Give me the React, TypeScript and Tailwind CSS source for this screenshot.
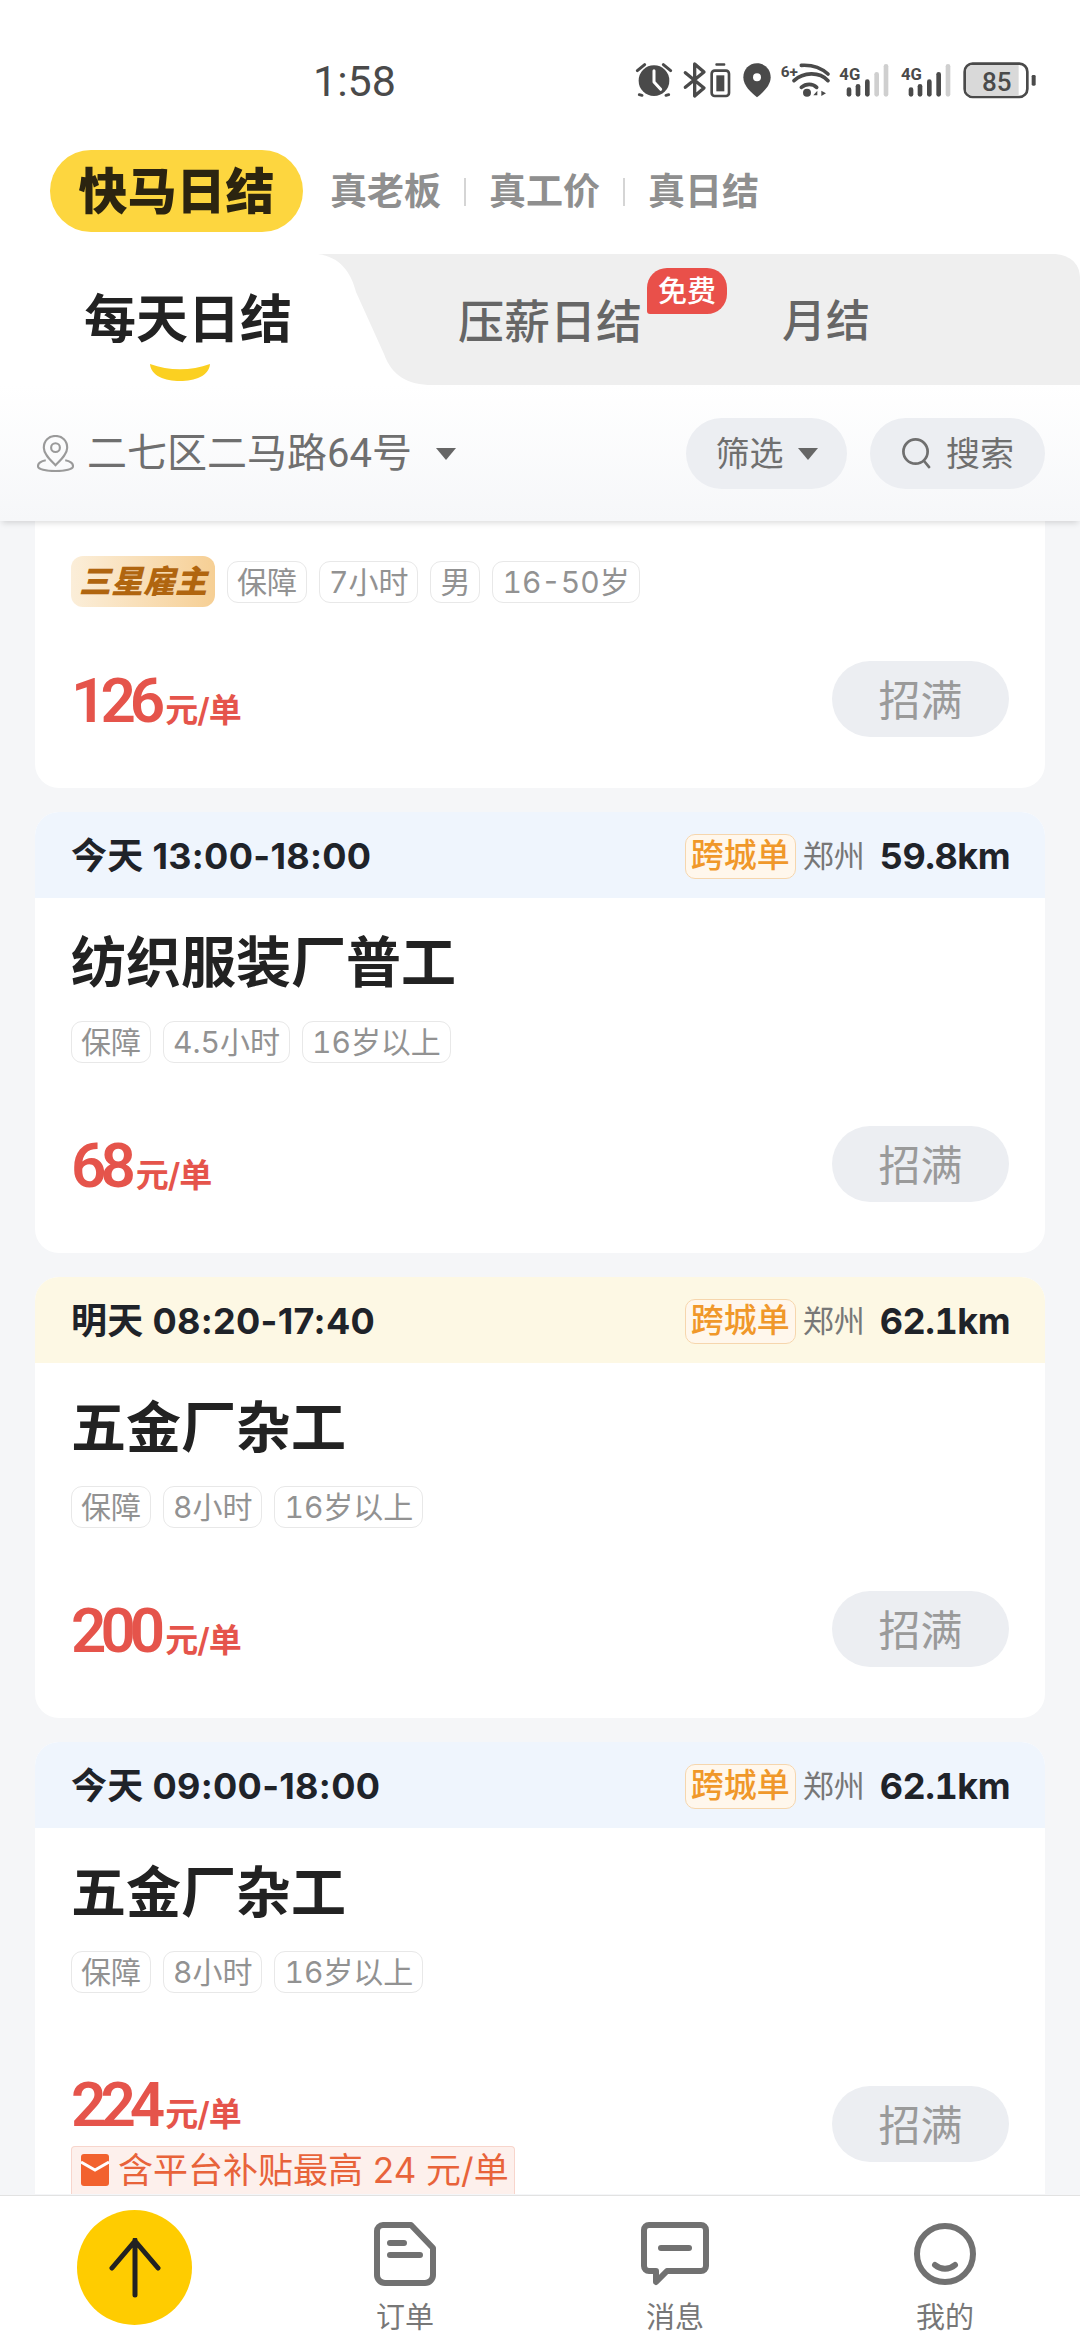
function StatusIcons() {
  return (
    <svg viewBox="0 0 1440 240" className="w-[480px] h-[80px] shrink-0" fill="#4a4a4a">
      {/* alarm */}
      <circle cx="162" cy="122" r="46" />
      <path d="M162 92v34l20 22" fill="none" stroke="#fff" strokeWidth="9" strokeLinecap="round" strokeLinejoin="round" />
      <path d="M112 92l22-18M212 92l-22-18M126 166l-8 -2M198 166l8-2" stroke="#4a4a4a" strokeWidth="9" strokeLinecap="round" />
      {/* bluetooth + vibrate */}
      <path d="M256 98l56 46-28 24V72l28 24-56 46" fill="none" stroke="#4a4a4a" strokeWidth="10" strokeLinejoin="round" strokeLinecap="round" />
      <rect x="335" y="92" width="52" height="76" rx="9" fill="none" stroke="#4a4a4a" strokeWidth="8" />
      <rect x="349" y="106" width="24" height="48" />
      <rect x="346" y="70" width="30" height="7" rx="3" />
      {/* location */}
      <path d="M471 70c-24 0-41 19-41 42 0 26 25 47 41 60 16-13 41-34 41-60 0-23-17-42-41-42z" />
      <circle cx="471" cy="112" r="12" fill="#fff" />
      {/* wifi */}
      <text x="542" y="110" fontSize="46" fontWeight="700" fontFamily="Roboto, sans-serif">6+</text>
      <path d="M604 76c32-2 60 8 80 26M582 122c28-26 76-28 102 0M604 142c14-12 34-12 46 0" fill="none" stroke="#4a4a4a" strokeWidth="11" strokeLinecap="round" />
      <circle cx="621" cy="158" r="12" />
      <path d="M640 166l12-14v14zM664 152l14 8-14 8z" />
      {/* signal 1 */}
      <text x="718" y="120" fontSize="50" fontWeight="700" fontFamily="Roboto, sans-serif">4G</text>
      <rect x="740" y="142" width="14" height="28" rx="7" />
      <rect x="767" y="132" width="14" height="38" rx="7" />
      <rect x="795" y="118" width="14" height="52" rx="7" />
      <rect x="823" y="96" width="14" height="74" rx="7" fill="#cfcfcf" />
      <rect x="851" y="72" width="14" height="98" rx="7" fill="#cfcfcf" />
      {/* signal 2 */}
      <text x="903" y="120" fontSize="50" fontWeight="700" fontFamily="Roboto, sans-serif">4G</text>
      <rect x="926" y="142" width="14" height="28" rx="7" />
      <rect x="953" y="132" width="14" height="38" rx="7" />
      <rect x="981" y="118" width="14" height="52" rx="7" />
      <rect x="1009" y="96" width="14" height="74" rx="7" />
      <rect x="1037" y="72" width="14" height="98" rx="7" fill="#cfcfcf" />
      {/* battery */}
      <rect x="1094" y="71" width="188" height="100" rx="24" fill="none" stroke="#4a4a4a" strokeWidth="8" />
      <path d="M1118 75h138v92h-138a20 20 0 0 1-20-20v-52a20 20 0 0 1 20-20z" fill="#d9d9d9" />
      <rect x="1295" y="105" width="12" height="32" rx="4" />
      <text x="1190" y="152" textAnchor="middle" fontSize="78" fontWeight="500" fontFamily="Roboto, sans-serif">85</text>
    </svg>
  );
}

function StatusBar() {
  return (
    <div className="flex h-[130px] pt-[40px] pl-[313px] items-start justify-between">
      <span className="text-[43px] leading-[82px] text-[#4a4a4a] font-['Roboto']">1:58</span>
      <StatusIcons />
    </div>
  );
}

function BrandRow() {
  return (
    <div className="flex h-[124px] items-start pl-[50px] pt-[20px]">
      <div className="flex h-[82px] w-[253px] items-center justify-center rounded-[41px] bg-[#fdd63f] pt-[2px] text-[49px] font-black text-[#2b2410]">
        快马日结
      </div>
      <div className="flex h-[82px] items-center pl-[27px] pt-[2px] text-[37px] font-semibold text-[#8f8f8f]">
        <span>真老板</span>
        <span className="mx-[23px] h-[28px] w-[2px] bg-[#d5d5d5]" />
        <span>真工价</span>
        <span className="mx-[23px] h-[28px] w-[2px] bg-[#d5d5d5]" />
        <span>真日结</span>
      </div>
    </div>
  );
}

function Tabs() {
  return (
    <div className="relative z-20 h-[131px]">
      {/* inactive tab area */}
      <svg viewBox="0 0 1080 131" className="absolute inset-0 h-full w-full" fill="#efefef">
        <path d="M318 0C340 3 351 18 356 38L384 100C392 122 408 131 432 131H1080V24C1080 8 1068 0 1052 0Z" />
      </svg>
      <div className="relative flex h-full">
        <div className="relative w-[374px] pl-[84px] pt-[28px] text-[52px] leading-[76px] font-bold text-[#222]">
          每天日结
          <svg viewBox="0 0 62 20" className="absolute left-[149px] top-[108px] h-[20px] w-[62px]">
            <path d="M1 2C20 9 42 9 61 2C60 14 46 19 31 19C16 19 2 14 1 2Z" fill="#fbd021" />
          </svg>
        </div>
        <div className="relative ml-[84px] pt-[29px] text-[46px] leading-[76px] font-medium text-[#666]">
          压薪日结
          <span className="absolute left-[189px] top-[14px] flex h-[46px] w-[80px] items-center justify-center rounded-t-[20px] rounded-br-[20px] rounded-bl-[3px] bg-[#e9504a] text-[29px] leading-none font-medium text-white">
            免费
          </span>
        </div>
        <div className="ml-[140px] pt-[29px] text-[44px] leading-[76px] font-medium text-[#666]">月结</div>
      </div>
    </div>
  );
}

function Caret({ className }: { className: string }) {
  return (
    <svg viewBox="0 0 20 12" className={className} fill="#666">
      <path d="M0 0h20L10 12z" />
    </svg>
  );
}

function FilterRow() {
  return (
    <div className="relative z-10 flex h-[136px] items-start bg-gradient-to-b from-white to-[#f6f7f9] pl-[37px] pt-[33px] pr-[35px] shadow-[0_4px_6px_-2px_rgba(0,0,0,0.14)]">
      <div className="flex h-[71px] flex-1 items-center">
        <svg viewBox="0 0 38 38" className="h-[37px] w-[37px]" fill="none" stroke="#9a9a9a" strokeWidth="2.2">
          <path d="M19 1c-7 0-12 5-12 12 0 7 7 13 12 18 5-5 12-11 12-18 0-7-5-12-12-12z" />
          <circle cx="19" cy="13" r="4.5" />
          <path d="M9 26c-5 1-8 3-8 6 0 3 8 5 18 5s18-2 18-5c0-3-3-5-8-6" />
        </svg>
        <span className="ml-[13px] text-[40px] text-[#6f6f6f]">
          二七区二马路<span className="font-['Roboto']">64</span>号
        </span>
        <Caret className="ml-[24px] h-[12px] w-[20px]" />
      </div>
      <div className="flex h-[71px] w-[161px] items-center justify-center gap-[14px] rounded-[36px] bg-[#eceef2] text-[34px] text-[#6f6f6f]">
        筛选
        <Caret className="h-[12px] w-[20px]" />
      </div>
      <div className="ml-[23px] flex h-[71px] w-[175px] items-center justify-center gap-[14px] rounded-[36px] bg-[#eceef2] text-[34px] text-[#6f6f6f]">
        <svg viewBox="0 0 32 34" className="h-[33px] w-[31px]" fill="none" stroke="#6f6f6f" strokeWidth="2.8" strokeLinecap="round">
          <circle cx="15" cy="15" r="12.5" />
          <path d="M24 25l5 6" />
        </svg>
        搜索
      </div>
    </div>
  );
}

function Tag({ children }: { children: React.ReactNode }) {
  return (
    <span className="flex h-[42px] items-center rounded-[11px] border border-[#e8e8e8] bg-white px-[9px] text-[30px] leading-none text-[#929292] tabular-nums">
      {children}
    </span>
  );
}

function Price({ value }: { value: string }) {
  return (
    <div className="flex items-baseline pt-[6px] text-[#e5544b]">
      <span className="pr-[6px] font-['Roboto'] text-[62px] leading-[66px] font-semibold tracking-[-6px]">{value}</span>
      <span className="text-[33px] font-semibold tracking-[-1px]">元/单</span>
    </div>
  );
}

function FullButton() {
  return (
    <div className="flex h-[76px] w-[177px] items-center justify-center rounded-[38px] bg-[#eceef2] pt-[3px] text-[42px] text-[#9a9a9a]">
      招满
    </div>
  );
}

function CardHeader({ when, dist, tone }: { when: string; dist: string; tone: string }) {
  return (
    <div className={`flex h-[86px] items-center pl-[36px] pr-[35px] pt-[2px] ${tone}`}>
      <span className="text-[36px] font-bold tracking-[0.3px] text-[#1f2329]">{when}</span>
      <span className="ml-auto flex h-[45px] items-center rounded-[10px] border border-[#f6d6ad] bg-[#fff7ec] px-[5px] text-[33px] font-medium text-[#f0982a]">
        跨城单
      </span>
      <span className="ml-[7px] text-[31px] text-[#777]">郑州</span>
      <span className="ml-[15px] text-[36px] font-bold tracking-[-0.5px] tabular-nums text-[#1f2329]">{dist}</span>
    </div>
  );
}

type Job = {
  when: string;
  dist: string;
  title: string;
  tags: string[];
  price: string;
  tone: string;
};

function JobCard({ job }: { job: Job }) {
  return (
    <div className="mt-[24px] h-[441px] overflow-hidden rounded-[24px] bg-white">
      <CardHeader when={job.when} dist={job.dist} tone={job.tone} />
      <div className="px-[36px] pt-[26px]">
        <div className="text-[55px] leading-[76px] font-bold text-[#222]">{job.title}</div>
        <div className="mt-[21px] flex gap-[12px]">
          {job.tags.map((t) => (
            <Tag key={t}>{t}</Tag>
          ))}
        </div>
        <div className="mt-[63px] flex items-center justify-between">
          <Price value={job.price} />
          <FullButton />
        </div>
      </div>
    </div>
  );
}

function FirstCard() {
  return (
    <div className="h-[267px] rounded-b-[24px] bg-white px-[36px] pt-[35px]">
      <div className="flex items-center gap-[12px]">
        <span className="flex h-[51px] w-[144px] items-center justify-center rounded-[12px] bg-gradient-to-r from-[#fbeed9] to-[#f6cf94] text-[32px] leading-none font-black italic text-[#b0650f]">
          三星雇主
        </span>
        <Tag>保障</Tag>
        <Tag>7小时</Tag>
        <Tag>男</Tag>
        <Tag>16-50岁</Tag>
      </div>
      <div className="mt-[54px] flex items-center justify-between">
        <Price value="126" />
        <FullButton />
      </div>
    </div>
  );
}

function LastCard() {
  return (
    <div className="mt-[24px] overflow-hidden rounded-t-[24px] bg-white">
      <CardHeader when="今天 09:00-18:00" dist="62.1km" tone="bg-[#eff5fd]" />
      <div className="px-[36px] pt-[26px]">
        <div className="text-[55px] leading-[76px] font-bold text-[#222]">五金厂杂工</div>
        <div className="mt-[21px] flex gap-[12px]">
          <Tag>保障</Tag>
          <Tag>8小时</Tag>
          <Tag>16岁以上</Tag>
        </div>
        <div className="mt-[73px] flex items-start justify-between">
          <div>
            <Price value="224" />
            <div className="mt-[6px] flex h-[48px] w-[444px] items-center rounded-t-[4px] border border-b-0 border-[#f8d5cc] bg-[#fdf0ec] pl-[9px] text-[35px] leading-[44px] text-[#e8633a]">
              <svg viewBox="0 0 28 32" className="h-[32px] w-[28px]">
                <rect width="28" height="32" rx="3" fill="#f2622e" />
                <path d="M0 8l14 8 14-8" fill="none" stroke="#fff" strokeWidth="3" />
              </svg>
              <span className="ml-[9px] whitespace-nowrap">含平台补贴最高 24 元/单</span>
            </div>
          </div>
          <div className="pt-[20px]">
            <FullButton />
          </div>
        </div>
      </div>
    </div>
  );
}

function BottomNav() {
  return (
    <div className="relative z-10 flex h-[145px] shrink-0 border-t border-[#e2e2e2] bg-white">
      <div className="flex w-[270px] shrink-0 justify-center pt-[14px]">
        <div className="ml-[-1px] flex h-[115px] w-[115px] items-center justify-center rounded-full bg-[#ffcc00]">
          <svg viewBox="0 0 60 60" className="h-[60px] w-[60px]" fill="none" stroke="#222" strokeWidth="5" strokeLinecap="round" strokeLinejoin="round">
            <path d="M30 57V2M7 30L30 3l23 27" />
          </svg>
        </div>
      </div>
      <NavItem label="订单">
        <path d="M12 3h28l22 23v27a8 8 0 0 1-8 8H14a8 8 0 0 1-8-8V9a6 6 0 0 1 6-6z" strokeLinejoin="round" />
        <path d="M19 21h14M19 33h30" />
      </NavItem>
      <NavItem label="消息">
        <path d="M8 3h52a5 5 0 0 1 5 5v36a5 5 0 0 1-5 5H26l-11 11v-11H8a5 5 0 0 1-5-5V8a5 5 0 0 1 5-5z" strokeLinejoin="round" />
        <path d="M20 26h28" />
      </NavItem>
      <NavItem label="我的">
        <circle cx="34" cy="32" r="28" />
        <path d="M24 43c6 5 14 5 20 0" />
      </NavItem>
    </div>
  );
}

function NavItem({ label, children }: { label: string; children: React.ReactNode }) {
  return (
    <div className="flex w-[270px] flex-col items-center pt-[26px]">
      <svg viewBox="0 0 68 64" className="h-[64px] w-[68px]" fill="none" stroke="#717171" strokeWidth="6" strokeLinecap="round">
        {children}
      </svg>
      <span className="mt-[14px] text-[29px] leading-[36px] text-[#777]">{label}</span>
    </div>
  );
}

const jobs: Job[] = [
  {
    when: "今天 13:00-18:00",
    dist: "59.8km",
    title: "纺织服装厂普工",
    tags: ["保障", "4.5小时", "16岁以上"],
    price: "68",
    tone: "bg-[#eff5fd]",
  },
  {
    when: "明天 08:20-17:40",
    dist: "62.1km",
    title: "五金厂杂工",
    tags: ["保障", "8小时", "16岁以上"],
    price: "200",
    tone: "bg-[#fdf8e4]",
  },
];

export default function App() {
  return (
    <div className="flex h-[2340px] w-[1080px] flex-col overflow-hidden bg-[#f5f6f8] font-['Inter','Noto_Sans_CJK_SC',sans-serif]">
      <div className="shrink-0 bg-white">
        <StatusBar />
        <BrandRow />
        <Tabs />
        <FilterRow />
      </div>
      <div className="min-h-0 flex-1 overflow-hidden px-[35px]">
        <FirstCard />
        {jobs.map((j) => (
          <JobCard key={j.title} job={j} />
        ))}
        <LastCard />
      </div>
      <BottomNav />
    </div>
  );
}
